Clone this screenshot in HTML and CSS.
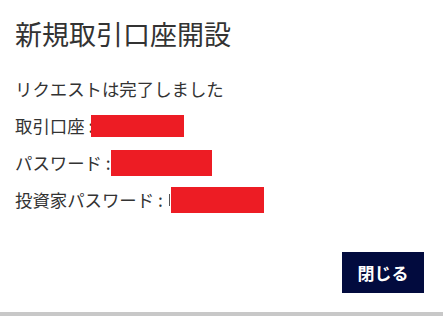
FILE: index.html
```html
<!DOCTYPE html>
<html lang="ja">
<head>
<meta charset="utf-8">
<title>新規取引口座開設</title>
<link rel="stylesheet" href="styles.css">
</head>
<body>
<div class="modal">
  <h1 class="title">新規取引口座開設</h1>
  <div class="content">
    <p class="line">リクエストは完了しました</p>
    <p class="line">取引口座 :<span class="redact r1"></span></p>
    <p class="line">パスワード :<span class="redact r2"></span></p>
    <p class="line">投資家パスワード :<span class="peek"></span><span class="redact r3"></span></p>
  </div>
  <div class="footer">
    <button class="btn" type="button">閉じる</button>
  </div>
</div>
</body>
</html>
```

FILE: styles.css
```css
html, body {
  margin: 0;
  padding: 0;
}
body {
  background: #c8c8c8;
  height: 316px;
  overflow: hidden;
  font-family: "Noto Sans CJK JP", "Noto Sans", sans-serif;
  color: #333333;
}
.modal {
  background: #ffffff;
  height: 312px;
  box-sizing: border-box;
  padding: 17px 19px 0 15px;
  display: flex;
  flex-direction: column;
}
.title {
  margin: 0;
  font-size: 27px;
  font-weight: 400;
  line-height: 34px;
  color: #333333;
}
.content {
  margin-top: 19px;
}
.line {
  margin: 0;
  font-size: 17.4px;
  line-height: 37px;
  height: 37px;
  display: flex;
  align-items: center;
  white-space: nowrap;
}
.redact {
  display: inline-block;
  background: #ed1c24;
}
.r1 { width: 93px; height: 22px; margin-left: -2px; }
.r2 { width: 101px; height: 26px; margin-left: 0; }
.r3 { width: 93px; height: 26px; }
.peek {
  display: inline-block;
  width: 1px;
  height: 12px;
  background: #555555;
  margin-left: 6px;
  margin-right: 1px;
}
.footer {
  display: flex;
  justify-content: flex-end;
  margin-top: 34px;
}
.btn {
  width: 82px;
  height: 41px;
  border: none;
  background: #020b3e;
  color: #ffffff;
  font-family: "Noto Sans CJK JP", "Noto Sans", sans-serif;
  font-size: 17px;
  font-weight: 700;
  padding: 0;
}
```
